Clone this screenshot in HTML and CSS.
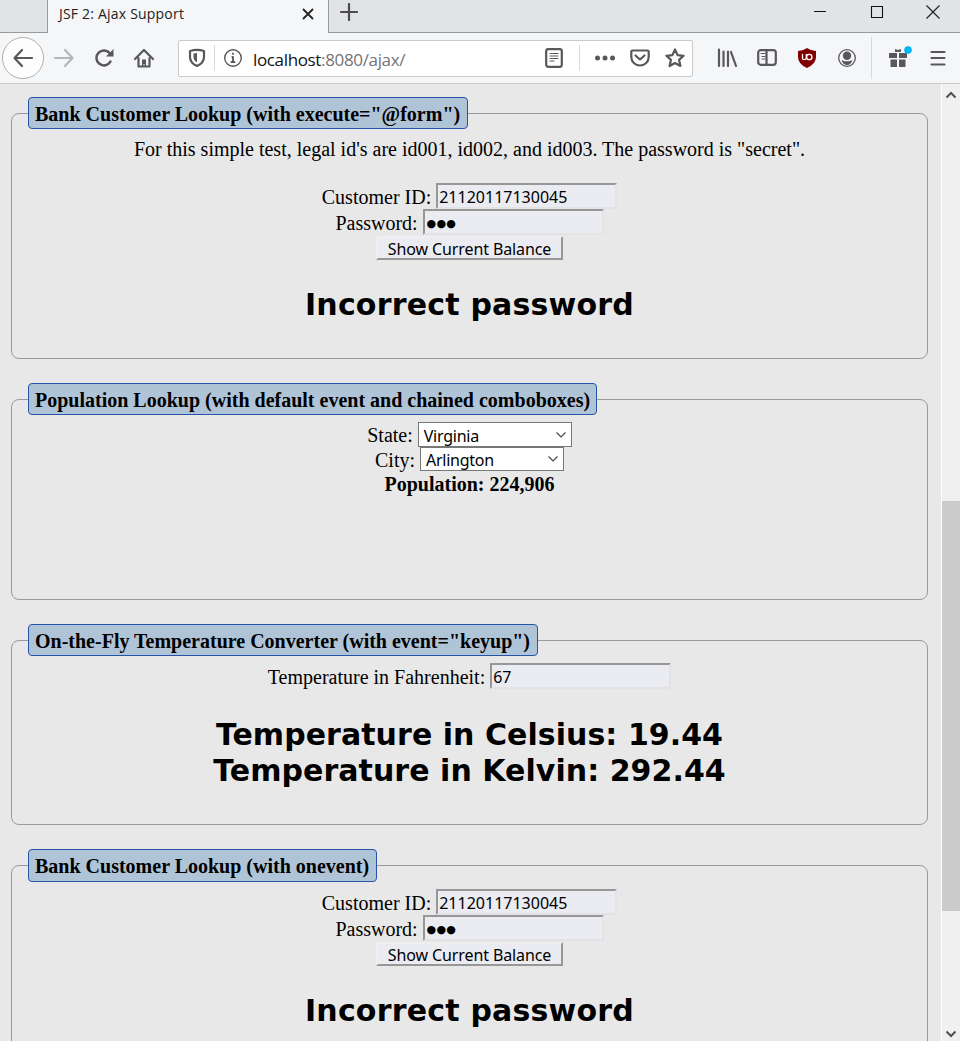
FILE: index.html
```
<!DOCTYPE html>
<html lang="en">
<head>
<meta charset="utf-8">
<title>JSF 2: Ajax Support</title>
<link rel="stylesheet" href="styles.css">
</head>
<body>
<header class="tabs">
  <div class="tab-rest"></div>
  <div class="tab"><span class="tab-title">JSF 2: Ajax Support</span>
    <svg class="tab-close" width="12" height="12" viewBox="0 0 12 12"><path d="M1 1l10 10M11 1L1 11" stroke="#222" stroke-width="1.8"/></svg>
  </div>
  <div class="tab-bar">
    <svg class="plus" width="18" height="18" viewBox="0 0 18 18"><path d="M9 1v16M1 9h16" stroke="#4c4c4f" stroke-width="2.2" stroke-linecap="round"/></svg>
    <svg class="win" width="112" height="14" viewBox="0 0 112 14"><path d="M0 6.500h12M57.500 1.500h11v11h-11z" fill="none" stroke="#111" stroke-width="1.100"/></svg>
    <svg class="win-close" width="14" height="14" viewBox="0 0 14 14"><path d="M.5 .5l13 13M13.5 .5l-13 13" stroke="#222" stroke-width="1.2"/></svg>
  </div>
</header>
<nav class="toolbar">
  <span class="back"><svg class="ic" viewBox="0 0 20 20"><path d="M19 10H1.5M9 2L1.5 10 9 18"/></svg></span>
  <svg class="ic forward" viewBox="0 0 20 20"><path d="M1 10h17.500M11 2l7.500 8-7.500 8"/></svg>
  <svg class="ic reload" viewBox="0 0 20 20"><path d="M16.500 13.500A7.500 7.500 0 1 1 16 5.500"/><path class="fill" d="M19.500 1v7.500H12z"/></svg>
  <svg class="ic home" viewBox="0 0 20 20"><path d="M1 11l9-9 9 9M4.500 10v8.500h11V10"/><path class="fill" d="M8 11.500h4V19h-1.500v-3h-1v3H8z"/></svg>
  <div class="url">
    <svg class="ic shield" viewBox="0 0 20 20"><path d="M3 3Q10 .8 17 3v6c0 4.500-2.500 7-7 9C5.500 16 3 13.500 3 9z"/><path class="fill" d="M6.500 5.500L10 5v9.500C7.500 13 6.500 11 6.500 9z"/></svg>
    <i class="sep"></i>
    <svg class="ic info" viewBox="0 0 20 20"><circle cx="10" cy="10" r="8.300"/><path class="bar" d="M9.300 9h.7v5M8.500 14h3M10 5.500v.5"/></svg>
    <span class="address"><b>localhost</b>:8080/ajax/</span>
    <svg class="ic" viewBox="0 0 20 20"><rect x="2.200" y="1.200" width="15.600" height="17.600" rx="2"/><path class="thin" d="M6 5.500h8M6 8h8M6 10.500h8M6 13h4"/></svg>
    <i class="sep right"></i>
    <svg class="ic dots" viewBox="0 0 20 20"><circle class="fill" cx="2.500" cy="10" r="2.500"/><circle class="fill" cx="10" cy="10" r="2.500"/><circle class="fill" cx="17.500" cy="10" r="2.500"/></svg>
    <svg class="ic pocket" viewBox="0 0 20 20"><path d="M2.500 2.500h15q1.200 0 1.200 1.200V9A8.700 8.500 0 0 1 1.300 9V3.700q0-1.200 1.200-1.200z"/><path d="M5.500 7.500l4.500 4 4.500-4"/></svg>
    <svg class="ic star" viewBox="0 0 20 20"><path d="M10 1.500l2.600 5.600 6 .7-4.500 4.100 1.300 6.100L10 15l-5.400 3 1.300-6.100L1.400 7.800l6-.7z"/></svg>
  </div>
  <div class="tools">
    <svg class="ic" viewBox="0 0 20 20"><path d="M2 1.500v16.500M6.500 3.500V18M11 3.500V18M14 4l5 14"/></svg>
    <svg class="ic" viewBox="0 0 20 20"><rect x="1.200" y="2.200" width="17.600" height="14.600" rx="2.500"/><path d="M9.500 2v15"/><path class="thin" d="M4 5.500h4M5 8.500h3M5 11h3"/></svg>
    <svg class="ic" viewBox="0 0 20 20"><path d="M10 0q4 3 9 3v6q0 7-9 11Q1 16 1 9V3q5 0 9-3z" fill="#800000" stroke="none"/><path d="M5.500 6.500V10q0 1.700 1.800 1.700T9.300 10V6.500" stroke="#fff" stroke-width="1.300"/><circle cx="12.300" cy="9" r="2.700" stroke="#fff" stroke-width="1.300"/></svg>
    <svg class="ic" viewBox="0 0 20 20"><circle cx="10" cy="10" r="8.300" stroke-width="1.300"/><circle class="fill" cx="10" cy="7.800" r="4.200"/><path class="fill" d="M4.500 12q2 1 3 1.300h5q1-.3 3-1.300-1.500 5-5.500 5t-5.500-5z"/></svg>
  </div>
  <i class="sep tool"></i>
  <svg class="ic gift" viewBox="0 0 20 20"><path class="fill" d="M0 5h8v5H0zM10 5h8v5h-8zM1.500 11.500H8V19H1.500zM10 11.500h6.500V19H10zM6 1l3 1 3-1v3H6z"/><circle cx="19" cy="2" r="3.800" fill="#00b3f4" stroke="none"/></svg>
  <svg class="ic menu" viewBox="0 0 20 20"><path d="M3.500 4h13M3.500 10h13M3.500 16.500h13"/></svg>
</nav>
<div class="view">
<main class="page">
  <fieldset class="bank">
    <legend class="l1">Bank Customer Lookup (with execute="@form")</legend>
    <div class="row note">For this simple test, legal id's are id001, id002, and id003. The password is "secret".</div>
    <div class="row field"><label>Customer ID:</label><input class="box" value="21120117130045"></div>
    <div class="row field"><label>Password:</label><input class="box secret" value="●●●"></div>
    <div class="row"><button class="show">Show Current Balance</button></div>
    <h2>Incorrect password</h2>
  </fieldset>
  <fieldset class="population">
    <legend class="l2">Population Lookup (with default event and chained comboboxes)</legend>
    <div class="row state"><label>State:</label><div class="combo">Virginia<svg width="12" height="8" viewBox="0 0 12 8"><path d="M1.500 1.500L6 6l4.500-4.500"/></svg></div></div>
    <div class="row city"><label>City:</label><div class="combo small">Arlington<svg width="12" height="8" viewBox="0 0 12 8"><path d="M1.500 1.500L6 6l4.500-4.500"/></svg></div></div>
    <div class="row count">Population: 224,906</div>
  </fieldset>
  <fieldset class="temperature">
    <legend class="l3">On-the-Fly Temperature Converter (with event="keyup")</legend>
    <div class="row field"><label>Temperature in Fahrenheit:</label><input class="box" value="67"></div>
    <h2 class="result">Temperature in Celsius: 19.44<br>Temperature in Kelvin: 292.44</h2>
  </fieldset>
  <fieldset class="bank last">
    <legend class="l4">Bank Customer Lookup (with onevent)</legend>
    <div class="row field"><label>Customer ID:</label><input class="box" value="21120117130045"></div>
    <div class="row field"><label>Password:</label><input class="box secret" value="●●●"></div>
    <div class="row"><button class="show">Show Current Balance</button></div>
    <h2>Incorrect password</h2>
  </fieldset>
</main>
<aside class="scroll">
  <svg width="12" height="8" viewBox="0 0 12 8"><path d="M1.500 6.500L6 2l4.500 4.500"/></svg>
  <div class="thumb"></div>
  <svg width="12" height="8" viewBox="0 0 12 8"><path d="M1.500 1.500L6 6l4.500-4.500"/></svg>
</aside>
</div>
</body>
</html>
```
FILE: styles.css
```
* { box-sizing: border-box; }
body { margin: 0; height: 1041px; overflow: hidden; display: flex; flex-direction: column; background: #e8e8e8; color: #000; font-family: "Liberation Serif", serif; font-size: 20px; }
svg { display: block; flex: none; }
.tabs { display: flex; height: 33px; flex: none; background: #f5f6f8; }
.tab-rest { width: 48px; background: #e2e3e5; border-right: 1px solid #999; border-bottom: 1px solid #999; }
.tab { width: 280px; display: flex; justify-content: space-between; padding: 4px 14px 0 11px; font: 14px/20px "Open Sans", sans-serif; color: #222; }
.tab-title { white-space: nowrap; letter-spacing: .2px; }
.tab-close { margin-top: 4px; }
.tab-bar { flex: 1; display: flex; background: #e2e3e5; border-left: 1px solid #999; border-bottom: 1px solid #999; padding-left: 11px; }
.plus { margin-top: 3px; }
.win { margin: 5px 0 0 456px; }
.win-close { margin-top: 5px; }

.toolbar { display: flex; align-items: center; height: 51px; flex: none; padding-left: 2px; background: #f5f6f8; border-bottom: 1px solid #c8c9cb; }
.ic { width: 20px; height: 20px; overflow: visible; fill: none; stroke: #58585b; stroke-width: 2.2; stroke-linecap: round; stroke-linejoin: round; }
.ic .fill { fill: #58585b; stroke: none; }
.ic .thin { stroke-width: 1.2; }
.back { display: flex; align-items: center; justify-content: center; width: 42px; height: 42px; flex: none; border: 1px solid #b1b1b3; border-radius: 50%; background: #fdfdfe; }
.forward { margin-left: 10px; stroke: #b5b6b8; }
.reload, .home { margin-left: 20px; }
.reload { stroke-width: 2.5; }
.url { display: flex; align-items: center; width: 515px; height: 37px; flex: none; margin-left: 24px; padding: 0 7px 0 8px; background: #fff; border: 1px solid #c9cacc; border-radius: 2px; }
.sep { width: 1px; height: 26px; flex: none; margin: 0 8px 0 7px; background: #d9d9db; }
.info { stroke-width: 1.4; }
.info .bar { stroke-width: 1.8; }
.address { flex: 1; margin-left: 10px; font: 17px/24px "Open Sans", sans-serif; color: #737376; letter-spacing: -.35px; padding-top: 3px; }
.address b { font-weight: 400; color: #111; }
.sep.right { margin: 0 15px; }
.pocket, .star { margin-left: 15px; }
.tools { display: flex; gap: 20px; margin-left: 24px; }
.sep.tool { height: 42px; margin: 0 17px 0 14px; }
.menu { margin-left: 19px; }

.view { flex: 1; min-height: 0; display: flex; }
.page { flex: 1; overflow: hidden; padding: 13px 13px 0 11px; display: flex; flex-direction: column; gap: 24px; }
fieldset { flex: none; margin: 0; padding: 0 16px; min-width: 0; border: 1px solid #9a9a9a; border-radius: 8px; }
legend { height: 32px; padding: 0 6px; border: 1px solid #2554a8; border-radius: 4px; background: #b0c4d8; font-weight: 700; font-size: 20px; line-height: 32px; white-space: nowrap; }
.l1 { width: 440px; }
.l2 { width: 569px; }
.l3 { width: 510px; }
.l4 { width: 349px; height: 33px; line-height: 33px; }
.bank { height: 262px; }
.population { height: 217px; }
.temperature { height: 201px; }
.row { display: flex; justify-content: center; align-items: center; white-space: nowrap; }
.note { height: 24px; margin: 7px 0 23px; padding-top: 2px; }
.field { gap: 5px; height: 26px; }
.field label { padding-top: 3px; }
.temperature .field, .last legend + .field { margin-top: 7px; }
.box { width: 181px; height: 26px; margin: 0; padding: 2px 1px 0; border: 2px solid; border-color: #979797 #e3e3e6 #e3e3e6 #979797; background: #ebebf2; color: #000; font: 16px "Noto Sans", sans-serif; outline: 0; }
.secret { font: 11px "DejaVu Sans", sans-serif; letter-spacing: .2px; padding-left: 2px; padding-top: 3px; }
.show { width: 187px; height: 24px; margin-top: 1px; padding: 2px 0 0; background: #ebebf2; border: 2px solid; border-color: #efeff1 #979797 #979797 #efeff1; font: 16px/18px "Noto Sans", sans-serif; letter-spacing: -.1px; color: #000; }
h2 { margin: 27px 0 0; text-align: center; font: 700 30px/36px "DejaVu Sans", sans-serif; letter-spacing: .2px; white-space: nowrap; }
.result { margin-top: 28px; letter-spacing: .05px; }
.state { margin-top: 7px; height: 25px; gap: 5px; }
.city { height: 24px; gap: 5px; }
.state label, .city label { padding-top: 2px; }
.count { height: 25px; padding-top: 2px; font-weight: 700; }
.combo { display: flex; align-items: center; justify-content: space-between; width: 154px; height: 25px; padding: 2px 4px 0 5px; background: #fff; border: 1px solid #777; font: 16px/20px "Noto Sans", sans-serif; letter-spacing: -.25px; }
.combo.small { width: 144px; height: 24px; }
.combo svg { margin-top: -2px; fill: none; stroke: #444; stroke-width: 1.1; }
.scroll { display: flex; flex-direction: column; align-items: center; justify-content: space-between; width: 19px; flex: none; padding: 7px 0 3px; background: #f0f0f0; border-left: 1px solid #fff; }
.scroll svg { fill: none; stroke: #505050; stroke-width: 2; }
.thumb { width: 18px; height: 410px; margin-top: 402px; margin-bottom: 119px; background: #cbcbcb; }
```
